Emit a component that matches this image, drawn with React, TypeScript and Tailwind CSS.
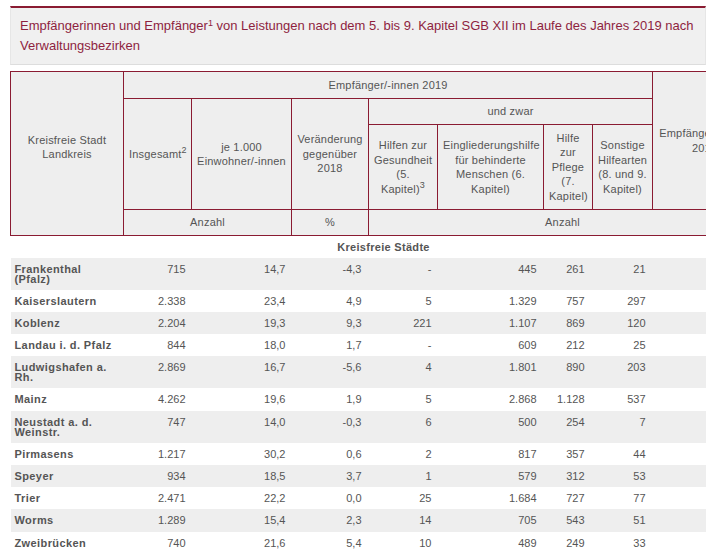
import React from "react";

type Row = {
  name: string;
  values: string[];
};

const rows: Row[] = [
  { name: "Frankenthal (Pfalz)", values: ["715", "14,7", "-4,3", "-", "445", "261", "21"] },
  { name: "Kaiserslautern", values: ["2.338", "23,4", "4,9", "5", "1.329", "757", "297"] },
  { name: "Koblenz", values: ["2.204", "19,3", "9,3", "221", "1.107", "869", "120"] },
  { name: "Landau i. d. Pfalz", values: ["844", "18,0", "1,7", "-", "609", "212", "25"] },
  { name: "Ludwigshafen a. Rh.", values: ["2.869", "16,7", "-5,6", "4", "1.801", "890", "203"] },
  { name: "Mainz", values: ["4.262", "19,6", "1,9", "5", "2.868", "1.128", "537"] },
  { name: "Neustadt a. d. Weinstr.", values: ["747", "14,0", "-0,3", "6", "500", "254", "7"] },
  { name: "Pirmasens", values: ["1.217", "30,2", "0,6", "2", "817", "357", "44"] },
  { name: "Speyer", values: ["934", "18,5", "3,7", "1", "579", "312", "53"] },
  { name: "Trier", values: ["2.471", "22,2", "0,0", "25", "1.684", "727", "77"] },
  { name: "Worms", values: ["1.289", "15,4", "2,3", "14", "705", "543", "51"] },
  { name: "Zweibrücken", values: ["740", "21,6", "5,4", "10", "489", "249", "33"] },
];

// right padding per number column, so the figures line up with the reference
const numPad = ["pr-[6px]", "pr-[6px]", "pr-[7px]", "pr-[6px]", "pr-[7px]", "pr-[8px]", "pr-[7px]"];

const th = "border border-[#8a1b32] bg-[#eeeeee] px-[5px] text-center align-middle font-normal";

const App: React.FC = () => {
  return (
    <div className="min-h-[557px] bg-white pt-[6px] font-['Liberation_Sans',Arial,sans-serif]">
      {/* Title box */}
      <div className="mx-[10px] w-[696px] border-t-2 border-b border-x border-t-[#8a1b32] border-b-[#dddddd] border-x-[#e6e6e6] bg-[#f0f0f0] pl-[9px] pr-0 pt-[8px] pb-[9px] text-[13px] leading-[19.5px] text-[#8e1f3f]">
        Empfängerinnen und Empfänger<sup className="text-[9px]">1</sup> von Leistungen nach dem 5. bis 9. Kapitel SGB XII im Laufe des Jahres 2019 nach Verwaltungsbezirken
      </div>

      {/* Table, clipped on the right like a scroll area */}
      <div className="mx-[10px] mt-[6px] w-[696px] overflow-hidden">
        <table className="w-[746px] table-fixed border-collapse text-[11px] text-[#555555]">
          <colgroup>
            <col className="w-[113px]" />
            <col className="w-[68px]" />
            <col className="w-[100px]" />
            <col className="w-[77px]" />
            <col className="w-[69px]" />
            <col className="w-[106px]" />
            <col className="w-[49px]" />
            <col className="w-[60px]" />
            <col className="w-[104px]" />
          </colgroup>
          <thead className="leading-[14.5px] tracking-[0.2px]">
            <tr className="h-[27px]">
              <th rowSpan={4} className={`${th} pb-[13px]`}>
                Kreisfreie Stadt
                <br />
                Landkreis
              </th>
              <th colSpan={7} className={th}>
                Empfänger/-innen 2019
              </th>
              <th rowSpan={3} className={th}>
                Empfänger/-innen 2018
              </th>
            </tr>
            <tr className="h-[26px]">
              <th rowSpan={2} className={th}>
                Insgesamt<sup className="text-[9px]">2</sup>
              </th>
              <th rowSpan={2} className={th}>
                je 1.000 Einwohner/-innen
              </th>
              <th rowSpan={2} className={th}>
                Veränderung gegenüber 2018
              </th>
              <th colSpan={4} className={th}>
                und zwar
              </th>
            </tr>
            <tr className="h-[85px]">
              <th className={th}>
                Hilfen zur Gesundheit (5. Kapitel)<sup className="text-[9px]">3</sup>
              </th>
              <th className={th}>Eingliederungshilfe für behinderte Menschen (6. Kapitel)</th>
              <th className={th}>Hilfe zur Pflege (7. Kapitel)</th>
              <th className={th}>Sonstige Hilfearten (8. und 9. Kapitel)</th>
            </tr>
            <tr className="h-[26px]">
              <th colSpan={2} className={th}>
                Anzahl
              </th>
              <th className={th}>%</th>
              <th colSpan={5} className={th}>
                Anzahl
              </th>
            </tr>
          </thead>
          <tbody className="leading-[10px]">
            <tr className="h-[22px]">
              <td colSpan={9} className="pt-[1px] text-center align-middle font-bold tracking-[0.3px]">
                Kreisfreie Städte
              </td>
            </tr>
            {rows.map((row, i) => (
              <tr key={row.name} className={i % 2 === 0 ? "bg-[#eeeeee]" : "bg-white"}>
                <td className="pl-[4px] pr-[8px] pt-[6px] pb-[6.2px] align-top font-bold tracking-[0.4px]">
                  {row.name}
                </td>
                {row.values.map((v, j) => (
                  <td key={j} className={`pt-[6px] pb-[6.2px] text-right align-top ${numPad[j]}`}>
                    {v}
                  </td>
                ))}
                <td />
              </tr>
            ))}
          </tbody>
        </table>
      </div>
    </div>
  );
};

export default App;
